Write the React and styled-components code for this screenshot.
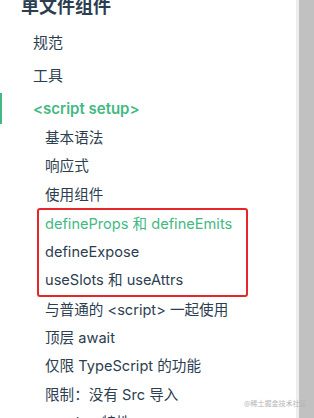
import React from 'react';
import styled, { createGlobalStyle } from 'styled-components';

const GlobalStyle = createGlobalStyle`
	html, body {
		margin: 0;
		padding: 0;
		background: #fff;
		overflow: hidden;
	}
	body {
		font-family: Inter, "Noto Sans CJK SC", sans-serif;
		color: #2c3e50;
	}
`;

const Page = styled.div`
	position: relative;
	display: flex;
	width: 314px;
	height: 418px;
	overflow: hidden;
`;

const Sidebar = styled.nav`
	flex: 1;
	min-width: 0;
`;

const Heading = styled.h2`
	margin: -5px 0 8px 21px;
	font-size: 18px;
	line-height: 24px;
	font-weight: 700;
	color: #2c3e50;
	white-space: nowrap;
`;

const Item = styled.div`
	height: 31px;
	line-height: 31px;
	margin-bottom: ${(p) => (p.$last ? '0' : '2px')};
	box-sizing: border-box;
	padding-left: 31px;
	font-size: 15px;
	white-space: nowrap;
	color: ${(p) => (p.$active ? '#42b983' : '#2c3e50')};
	font-weight: ${(p) => (p.$active ? 600 : 400)};
	border-left: 2px solid ${(p) => (p.$active ? '#42b983' : 'transparent')};
`;

const SubItem = styled.div`
	height: 28.3px;
	line-height: 28.3px;
	padding-left: 45px;
	font-size: 14.6px;
	white-space: nowrap;
	color: ${(p) => (p.$active ? '#42b983' : '#2c3e50')};
`;

const Highlight = styled.div`
	margin: -1px 0 -1px 37px;
	width: 211px;
	box-sizing: border-box;
	border: 2px solid #e5262b;
	border-radius: 3px;

	${SubItem} {
		padding-left: 6px;
	}
`;

const Scrollbar = styled.div`
	display: flex;
	width: 18px;
	flex-shrink: 0;
`;

const Track = styled.div`
	width: 3px;
	background: #ededed;
`;

const Thumb = styled.div`
	flex: 1;
	background: #c1c1c1;
`;

const Watermark = styled.span`
	position: absolute;
	left: 244px;
	top: 398px;
	font-size: 7px;
	line-height: 10px;
	color: #b4b4b4;
	white-space: nowrap;
	font-family: "Noto Sans CJK SC", sans-serif;
`;

const before = ['基本语法', '响应式', '使用组件'];
const boxed = [
	{ text: 'defineProps 和 defineEmits', active: true },
	{ text: 'defineExpose' },
	{ text: 'useSlots 和 useAttrs' },
];
const after = [
	'与普通的 <script> 一起使用',
	'顶层 await',
	'仅限 TypeScript 的功能',
	'限制：没有 Src 导入',
	'<style> 特性',
];

const App = () => {
	return (
		<>
			<GlobalStyle />
			<Page>
				<Sidebar>
					<Heading>单文件组件</Heading>
					<Item>规范</Item>
					<Item>工具</Item>
					<Item $active $last>{'<script setup>'}</Item>
					{before.map((t) => (
						<SubItem key={t}>{t}</SubItem>
					))}
					<Highlight>
						{boxed.map((b) => (
							<SubItem key={b.text} $active={b.active}>
								{b.text}
							</SubItem>
						))}
					</Highlight>
					{after.map((t) => (
						<SubItem key={t}>{t}</SubItem>
					))}
				</Sidebar>
				<Scrollbar>
					<Track />
					<Thumb />
				</Scrollbar>
				<Watermark>@稀土掘金技术社区</Watermark>
			</Page>
		</>
	);
};

export default App;
